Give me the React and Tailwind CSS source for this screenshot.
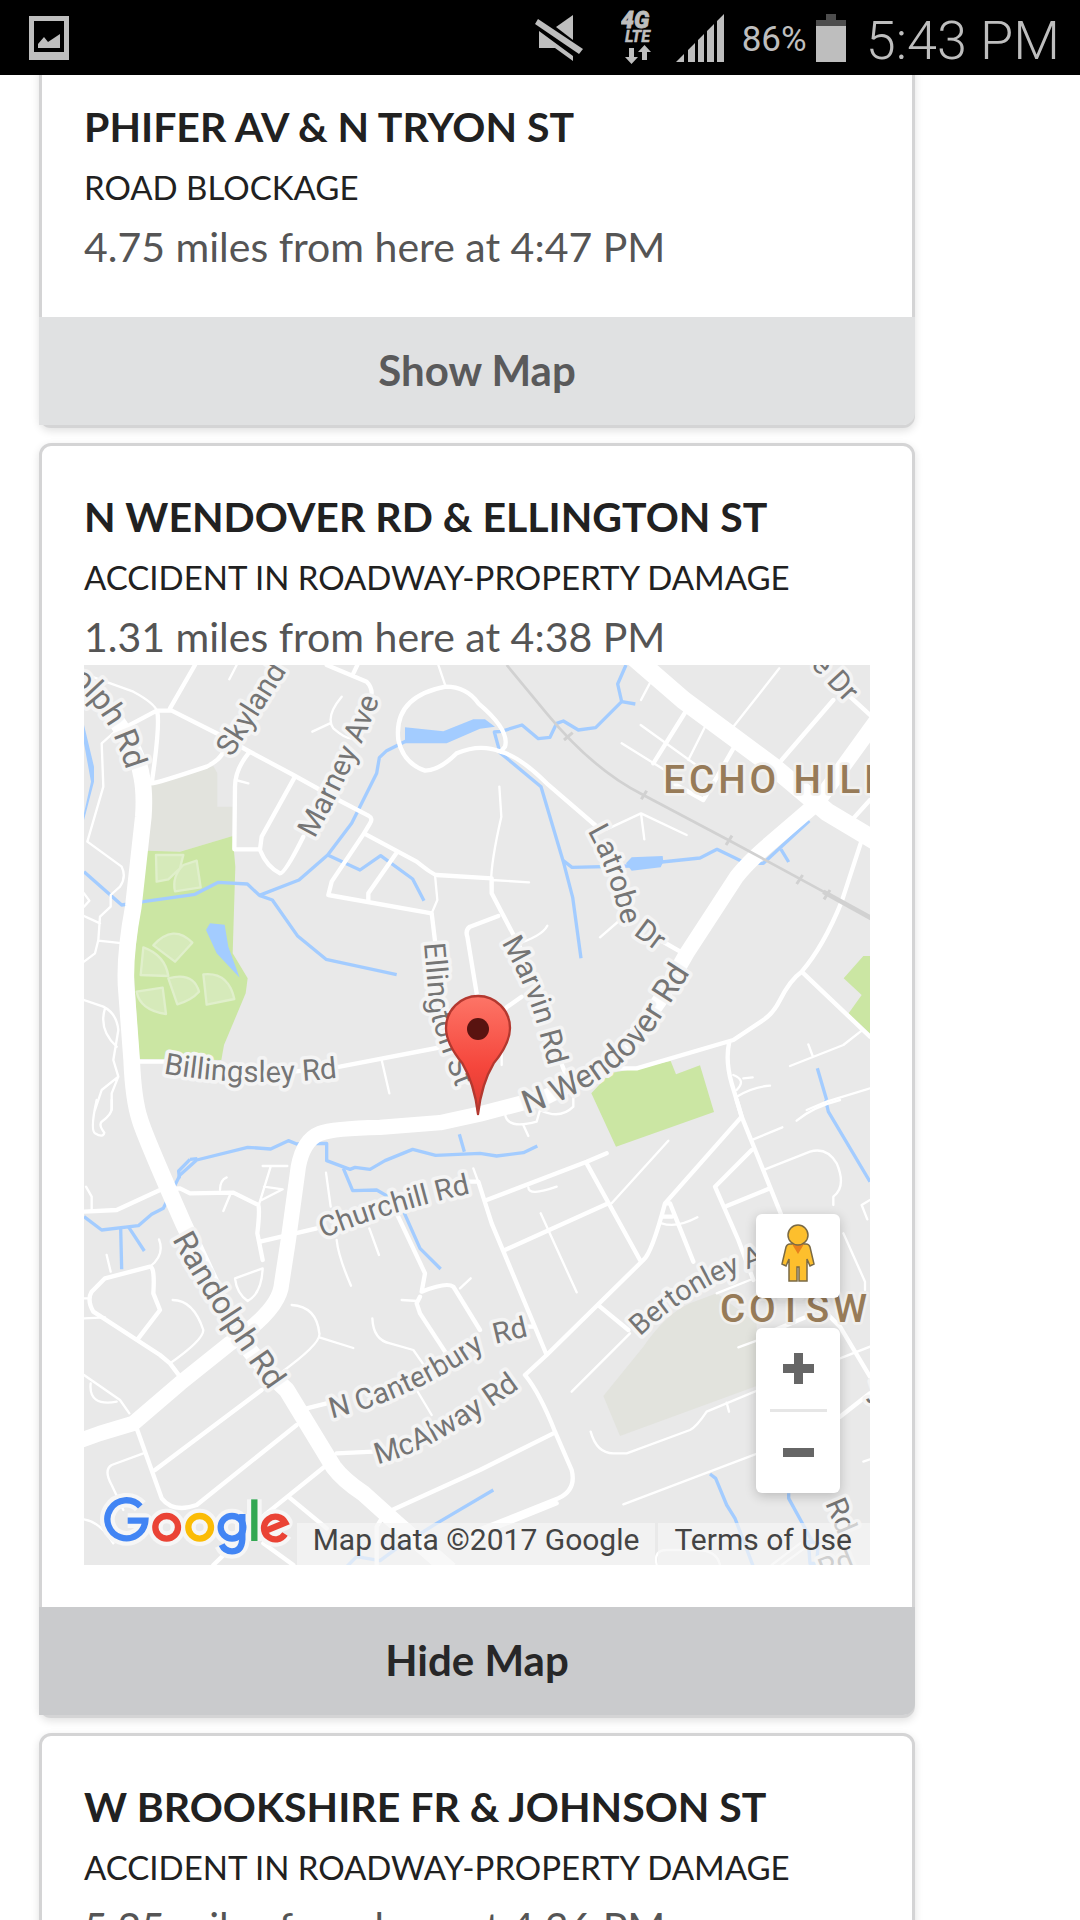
import { useId } from "react";

const incidents = [
  {
    place: "PHIFER AV & N TRYON ST",
    kind: "ROAD BLOCKAGE",
    meta: "4.75 miles from here at 4:47 PM",
    open: false,
  },
  {
    place: "N WENDOVER RD & ELLINGTON ST",
    kind: "ACCIDENT IN ROADWAY-PROPERTY DAMAGE",
    meta: "1.31 miles from here at 4:38 PM",
    open: true,
  },
  {
    place: "W BROOKSHIRE FR & JOHNSON ST",
    kind: "ACCIDENT IN ROADWAY-PROPERTY DAMAGE",
    meta: "5.25 miles from here at 4:36 PM",
    open: false,
  },
];

function StatusBar() {
  return (
    <header className="relative z-10 flex h-[75px] shrink-0 items-center bg-black pr-5 pl-[29px] font-['Roboto',sans-serif] text-[#bebebe]">
      <svg viewBox="0 0 40 44" className="h-11 w-10" fill="#bebebe" aria-label="Picture saved">
        <path fillRule="evenodd" d="M0 0H40V44H0ZM5 5V36H35V5Z" />
        <path d="M9 32V28L15 21L19 26L31 18V32Z" />
      </svg>
      <div className="ml-auto flex items-center">
        <svg viewBox="0 0 48 46" className="h-[46px] w-12" fill="#bebebe" aria-label="Sound off">
          <path d="M38 0V25L21 12Z" />
          <path d="M4 16L38 41V46L20 33H4Z" />
          <path d="M3 4L48 34L44 39L0 9Z" />
        </svg>
        <svg viewBox="0 0 34 56" className="ml-[38px] h-14 w-[34px]" fill="#bebebe" stroke="#bebebe" aria-label="4G LTE">
          <text x="0" y="18" fontSize="23" strokeWidth="0.8" className="font-['Roboto'] font-black italic">4G</text>
          <text x="4" y="32" fontSize="16" strokeWidth="0.5" className="font-['Roboto'] font-bold italic">LTE</text>
          <path stroke="none" d="M8 38H13V47H17L10.500 54L4 47H8Z" />
          <path stroke="none" d="M21 50H26V42H30L23.500 35L17 42H21Z" />
        </svg>
        <svg viewBox="0 0 48 48" className="ml-[21px] h-12 w-12" fill="#bebebe" aria-label="Signal">
          <path d="M0 48L8 40V48ZM12 48V36L19 29V48ZM22 48V26L28 20V48ZM31 48V17L38 10V48ZM41 48V7L48 0V48Z" />
        </svg>
        <span className="ml-[18px] pt-1.5 text-[35px]">86%</span>
        <svg viewBox="0 0 30 48" className="ml-[9px] h-12 w-[30px]" aria-label="Battery">
          <path fill="#4d4d4d" d="M10 0H20V6H30V12H0V6H10Z" />
          <path fill="#bebebe" d="M0 12H30V48H0Z" />
        </svg>
        <time className="ml-[20px] pt-1.5 text-[54px] font-light">5:43 PM</time>
      </div>
    </header>
  );
}

function Label({ d, size = 89, children }) {
  const id = useId();
  return (
    <>
      <path id={id} d={d} fill="none" />
      <text
        className="font-['Roboto']"
        fontSize={size}
        fill="#757575"
        stroke="#f4f4f4"
        strokeWidth="22"
        strokeLinejoin="round"
        paintOrder="stroke"
      >
        <textPath href={`#${id}`}>{children}</textPath>
      </text>
    </>
  );
}

function District({ x, y, children }) {
  return (
    <text
      x={x}
      y={y}
      className="font-['Roboto'] font-medium tracking-widest"
      fontSize="116"
      fill="#977b58"
      stroke="#f1f0ee"
      strokeWidth="16"
      strokeLinejoin="round"
      paintOrder="stroke"
    >
      {children}
    </text>
  );
}

function MapDrawing() {
  return (
    <svg
      viewBox="12 15 2358 2700"
      preserveAspectRatio="xMidYMid slice"
      className="block h-full w-full bg-[#e9e9e9]"
      role="img"
      aria-label="Map of N Wendover Rd and Ellington St"
    >
      <defs>
        <linearGradient id="pin" x1="0" y1="0" x2="0" y2="1">
          <stop offset="0" stopColor="#fd7567" />
          <stop offset="0.6" stopColor="#f5463c" />
          <stop offset="1" stopColor="#d93a30" />
        </linearGradient>
      </defs>

      {/* school grounds and parks */}
      <g fill="#e2e3dd">
        <path d="M210 372L400 318L412 340V440H458V528L300 575H200Z" />
        <path d="M1570 2208L1690 2060Q1760 1960 1830 1930L1910 1900L2030 1990V2178L1620 2328Z" />
      </g>
      <g fill="#cbe6a3">
        <path d="M200 572L300 575L458 528L466 620L458 880L503 955L497 1000L432 1155L424 1200L178 1197L160 920Z" />
        <path d="M1534 1300L1590 1240L1670 1225L1772 1203L1788 1243L1860 1216L1902 1356L1608 1460Z" />
        <path d="M2291 955L2350 888H2380V1130L2306 1060L2345 1005Z" />
      </g>
      <g fill="#d6eaba" stroke="#e0efcb" strokeWidth="7" strokeLinejoin="round">
        <path d="M228 585H310L300 625L265 658L230 665Z" />
        <path d="M310 615L350 602L362 682L285 694Q275 650 310 615Z" />
        <path d="M220 856Q280 790 337 848L285 905Z" />
        <path d="M190 862Q255 885 265 948L182 945Z" />
        <path d="M265 955Q340 935 357 995Q335 1020 292 1033Z" />
        <path d="M370 943Q445 935 463 1017L380 1034Z" />
        <path d="M170 995L248 983L258 1062Q180 1050 170 995Z" />
      </g>

      {/* water */}
      <g fill="#a3ccff">
        <path d="M390 790L434 794L445 860L479 953L410 880L378 810Z" />
        <path d="M975 202L1090 214L1180 178H1215L1245 200L1200 206L1100 250H975Z" />
        <path d="M1655 592L1748 588L1750 605L1742 622L1655 632L1638 610Z" />
        <path d="M12 195L42 320V365L12 480L12 460L33 365L12 250Z" />
      </g>
      <g fill="none" stroke="#a3ccff" strokeWidth="10" strokeLinejoin="round">
        <path d="M12 635L125 735L190 725L345 703L415 667L502 672L538 706L657 660L743 585L815 490L890 340L898 293L920 272L980 242" />
        <path d="M538 706L577 720L652 827L738 898L950 944" />
        <path d="M743 585L840 630L902 587L998 657L1032 722" />
        <path d="M1638 15L1613 72L1625 125L1547 203L1495 210L1450 183L1430 190L1410 232L1375 236L1326 195L1265 214L1243 216L1260 278L1383 380L1450 605L1478 712L1503 895" />
        <path d="M1625 125L1666 132M1450 602L1476 622L1650 618M1745 606L1860 594L1911 568L1990 606M2035 610H2050L2188 482M2103 568L2126 606" />
      </g>
      <g transform="translate(0 1320)" fill="none" stroke="#a3ccff" strokeWidth="10" strokeLinejoin="round">
        <path d="M12 350L65 390L175 377L215 343L250 325L300 225L350 180L503 142L572 147L625 122L650 132L740 130V182L810 208L825 202L870 208L915 182L998 148L1067 166L1200 160L1250 168L1330 158L1372 138" />
        <path d="M330 178L296 213L298 235M330 178L352 176M122 385L125 508M145 380L193 453M790 205L818 272L890 270L960 310L1020 445L1082 507M1138 103L1153 155M1240 1170L1070 1270L950 1345L900 1382L830 1370L800 1400" />
        <path d="M2237 0L2245 35L2370 245M2212 -95L2240 0M1890 1122L1907 1135L1940 1215L1965 1255L2020 1400M2126 1180V1195L2200 1330" />
        <path d="M2185 1325L2215 1330L2210 1390H2190Z" />
      </g>

      {/* lanes */}
      <g fill="none" stroke="#fff" strokeWidth="7" strokeLinejoin="round" strokeLinecap="round">
        <path d="M35 50L160 95Q225 130 232 155M110 210L65 250L70 380L22 545L125 620Q140 650 120 680L92 705V740L60 770L55 840L45 880L12 905M12 768L60 790M55 842L130 850M12 1020L70 1040Q110 1060 115 1110L100 1200L115 1250L95 1300V1350M75 1045Q55 1110 110 1160M115 1250L65 1290L45 1350M12 700L28 722L12 740" />
        <path d="M448 58L470 15M785 110Q735 170 760 205Q800 240 820 235M750 190L697 215M467 360L505 370M1065 645L1072 720L1055 760M905 1200L928 1300M1075 15L1097 80" />
        <path d="M1258 380L1264 470Q1225 640 1235 700M1235 660L1347 667M1300 855Q1385 830 1402 797M1560 832L1620 780M1580 508L1683 460L1820 525M1683 460L1693 538M1683 120L1720 50M1960 200L2098 25M1682 195L1890 345M1625 250L1770 340M1825 300L1875 200M2130 1218L2290 1155L2345 1112M2185 1153L2198 1188M1960 1245Q2000 1260 1970 1290M1970 1310Q2020 1280 2070 1277M1990 1255L2018 1252M2180 1350L2240 1325L2370 1285M1265 1215V1180" />
      </g>
      <g transform="translate(0 1320)" fill="none" stroke="#fff" strokeWidth="7" strokeLinejoin="round" strokeLinecap="round">
        <path d="M50 0Q30 90 45 100Q70 115 73 98Q55 75 65 65Q95 45 95 25V0M18 260L35 290V330M80 465L92 515M237 418Q255 465 210 500M12 595H30M12 655L75 652M420 270Q420 240 440 232M450 285L430 333M548 198L622 198M572 200L538 310M552 260L608 268L545 300M278 600Q340 600 370 690Q370 720 270 790M548 505L465 535Q470 580 503 603Q545 580 548 505M635 615Q710 620 718 700Q725 730 600 820M718 712L820 744M738 218L752 320M770 420Q775 470 813 557M868 385L897 465M965 600L1012 603M1140 565L1172 535M877 655Q880 720 930 730L1000 750L1035 800M1010 870L1055 945" />
        <path d="M12 825L120 900L148 940M32 850Q25 920 110 905M190 1060L95 1095Q70 1110 95 1155L130 1230M12 1258Q60 1265 100 1330M1180 205L1200 260" />
        <path d="M1275 40Q1280 90 1370 65L1380 30Q1440 60 1480 20V-10M1330 75L1345 108M1345 262Q1345 290 1430 260M1382 340L1490 577M1595 310L1765 122M1745 370Q1790 385 1852 352M2020 118L2107 82M2055 208L2190 155Q2240 140 2270 190Q2300 260 2260 290V315M2150 62Q2200 20 2280 0M2290 400L2355 545V570M2370 300L2345 315L2362 358M1475 875L1650 700M1532 995Q1550 1060 1600 1060H1640L1830 990Q1850 980 1880 935L2060 860M1940 908L1947 935M1630 1213L2060 1050M1975 742L2030 722M1910 580L2010 540M2280 775L2370 740M2350 1085L2370 1078M1730 1395Q1720 1350 1760 1350H1850Q1910 1350 1920 1395M2075 1395L2160 1330M2105 1395L2180 1340" />
      </g>

      {/* local streets */}
      <g fill="none" stroke="#fff" strokeWidth="13" strokeLinejoin="round" strokeLinecap="round">
        <path d="M140 200L230 152H275L420 225L500 270L640 345L775 420L865 467Q880 475 870 490L852 520L1010 605Q1060 645 1070 645L1235 655V700L1340 900M270 145L345 15M232 155Q240 200 215 370Q230 370 380 320Q420 300 430 275M505 280Q465 330 465 380L463 568H540L545 530L645 350M540 570Q560 620 600 640Q615 640 670 530M852 520L755 665L745 705L1055 760L1072 900M952 575L865 700V720M740 15L860 65Q875 80 875 100M820 40L832 15" />
        <path d="M1170 800Q1155 810 1162 830L1190 1000M1170 800L1255 768M1262 275Q1200 250 1130 280Q1080 330 1035 332Q970 310 955 240Q940 110 1097 80Q1160 80 1195 130Q1290 210 1275 260L1262 275Q1320 290 1400 370L1545 495M1740 840L1810 880M180 1205H260M640 1235L780 1220L1195 1140L1280 1042L1325 1010M1440 1200L1460 1250" />
        <path d="M1720 310L1820 150M2105 300L2260 120M2310 110L2370 165M2320 475L2370 420M2342 550L2285 725Q2230 860 2165 935Q2130 960 2100 1020Q2080 1060 2050 1080L1960 1140L1670 1225H1600M2165 935L2370 1130M1948 1145Q1935 1200 1955 1270L1985 1370M1870 420L1900 370L1960 265M1870 420L1780 370" />
      </g>
      <g transform="translate(0 1320)" fill="none" stroke="#fff" strokeWidth="13" strokeLinejoin="round" strokeLinecap="round">
        <path d="M12 335L110 330L240 270L300 265L330 280L460 278L535 315Q540 330 532 400L548 480M540 425L710 385M300 830L270 790L240 765L40 635Q20 600 35 575L75 535L210 500Q225 500 220 580L240 630L175 715M170 985L245 1195Q280 1240 350 1215L650 975M225 1110L545 870M680 925L740 910M770 1060L880 1055M740 1095L560 1240L400 1395M625 1190L740 1285M550 1330L640 1395M925 1235L1200 1110L1420 1000M890 1395V1280L915 1240" />
        <path d="M950 340L1035 520L1025 575Q1100 545 1120 560L1200 690M1020 590L1010 610L1020 640L1105 770" />
        <path d="M1120 245H1195L1235 370L1400 765L1335 825M1220 300L1520 185L1580 160M1520 190L1680 480M1275 450L1585 310M1400 765L1690 480Q1715 460 1755 310L1985 50L1970 0M1755 310H1770L1840 485M1745 350H1775M1985 50L2110 360M1940 318L2070 265M2015 150L1905 260L1975 420L2020 540M1560 620L1645 690M2200 600L2280 680L2370 830M2280 950L2370 880M1335 825Q1380 880 1425 995L1475 1110Q1490 1170 1435 1195L1170 1300M1430 1210L1180 1310M2085 690L2180 650M1335 680H1355" />
      </g>

      {/* main roads */}
      <g fill="none" stroke="#fff" strokeWidth="50" strokeLinejoin="round">
        <path d="M-60 -20L60 120Q170 250 185 350Q195 400 190 470L160 740Q130 900 140 1000L155 1200Q160 1320 180 1380Q195 1430 310 1690L450 1990Q530 2110 620 2190L760 2420Q790 2460 850 2500L950 2590L1110 2730" />
        <path d="M1660 -10L1810 120L2080 320L2240 455L2390 545" strokeWidth="56" />
        <path d="M0 2342L60 2320L160 2290L300 2170L450 2050Q600 1950 605 1870L625 1740L655 1520Q670 1440 720 1420Q760 1405 900 1402L1080 1388L1200 1362L1400 1310Q1560 1230 1640 1160L1740 1020L1820 880L1970 650Q2000 610 2070 550L2210 430L2390 180" strokeWidth="46" />
      </g>

      {/* railway */}
      <g fill="none" stroke="#d1d1d1">
        <path d="M1280 15L1400 160Q1540 330 1690 405L1945 540L2240 700" strokeWidth="8" />
        <path d="M2230 695L2380 778" strokeWidth="14" />
        <path d="M1452 240L1478 218M1684 418L1700 392M1938 555L1956 527M2150 672L2168 645M2232 718L2250 690" strokeWidth="9" />
      </g>

      <Label size={96} d="M-30 62Q55 140 92 210Q120 260 160 400">olph Rd</Label>
      <Label d="M455 293L660 -30">Skyland</Label>
      <Label d="M703 537Q850 270 930 30">Marney Ave</Label>
      <Label d="M250 1240Q520 1290 840 1245">Billingsley Rd</Label>
      <Label d="M1032 850L1048 1040Q1060 1120 1160 1360">Ellington St</Label>
      <Label d="M1522 513Q1595 640 1640 860">Latrobe</Label>
      <Label d="M1658 822L1790 920">Dr</Label>
      <Label d="M1264 848Q1340 980 1370 1090L1425 1290">Marvin Rd</Label>
      <Label size={98} d="M1340 1362Q1590 1280 1720 1110L1900 830">N Wendover Rd</Label>
      <Label d="M2190 15L2330 165">e Dr</Label>
      <District x="1750" y="398">ECHO HILLS</District>
      <g transform="translate(0 1320)">
        <Label size={87} d="M730 415Q950 325 1240 265">Churchill Rd</Label>
        <Label size={96} d="M276 418Q395 640 660 1000">Randolph Rd</Label>
        <Label size={87} d="M755 955Q1030 890 1270 705">N Canterbury</Label>
        <Label size={87} d="M1246 732L1380 700">Rd</Label>
        <Label d="M892 1092Q1074 1055 1410 795">McAlway Rd</Label>
        <Label size={86} d="M1680 710Q1806 590 1956 525L2160 450">Bertonley Ave</Label>
        <Label d="M2235 1210L2290 1340">Rd</Label>
        <Label d="M2230 1440L2330 1400">Rd</Label>
        <Label d="M2362 915L2420 895">J</Label>
        <District x="1920" y="665">COTSWOLD</District>
      </g>

      {/* marker */}
      <path
        d="M1194 1362Q1183 1270 1147 1210Q1098 1150 1098 1104A96 96 0 0 1 1290 1104Q1290 1150 1241 1210Q1205 1270 1194 1362Z"
        fill="url(#pin)"
        stroke="#b3382f"
        strokeWidth="7"
        strokeLinejoin="round"
      />
      <circle cx="1194" cy="1107" r="33" fill="#591310" />
    </svg>
  );
}

function LogoStrokes({ halo }) {
  const tone = (c) => (halo ? "#f6f6f6" : c);
  const w = halo ? 44 : 19;
  return (
    <g fill="none" strokeWidth={w} strokeLinejoin={halo ? "round" : "miter"}>
      <path d="M181 1219A57 57 0 1 0 196 1262H143" stroke={tone("#4285f4")} />
      <circle cx="260" cy="1282" r="34" stroke={tone("#ea4335")} />
      <circle cx="359" cy="1282" r="34" stroke={tone("#fbbc05")} />
      <circle cx="456" cy="1282" r="34" stroke={tone("#4285f4")} />
      <path d="M487 1242V1318Q485 1354 456 1354Q434 1354 425 1334" stroke={tone("#4285f4")} />
      <path d="M523 1198V1323" stroke={tone("#34a853")} />
      <path d="M551 1295L616 1268A34 34 0 1 0 615 1302" stroke={tone("#ea4335")} />
    </g>
  );
}

function GoogleLogo() {
  return (
    <svg viewBox="54 1176 588 210" className="h-[70px] w-[196px]" role="img" aria-label="Google">
      <LogoStrokes halo />
      <LogoStrokes />
    </svg>
  );
}

function Pegman() {
  return (
    <svg viewBox="0 0 34 60" className="h-[60px] w-[34px]" fill="#fdbf2d" stroke="#7a6a45" strokeWidth="1.5" aria-hidden="true">
      <path d="M9 21H25Q28 21 29 24L33 41L29 43L26 36V58H18V44H16V58H8V36L5 43L1 41L5 24Q6 21 9 21Z" />
      <path d="M11 21H23L17 31Z" fill="#e8801c" stroke="none" />
      <circle cx="17" cy="12" r="10" />
    </svg>
  );
}

function IncidentMap() {
  return (
    <div className="relative h-[900px] overflow-hidden">
      <MapDrawing />
      <div className="absolute bottom-[3px] left-[14px]">
        <GoogleLogo />
      </div>
      <div className="absolute right-[30px] bottom-[72px] flex w-[84px] flex-col gap-[30px]">
        <button
          type="button"
          aria-label="Street View"
          className="flex h-[84px] items-center justify-center rounded-md bg-white pb-1.5 shadow-[0_3px_12px_rgba(0,0,0,0.2)]"
        >
          <Pegman />
        </button>
        <div className="flex flex-col items-center rounded-md bg-white shadow-[0_3px_12px_rgba(0,0,0,0.2)]">
          <button type="button" aria-label="Zoom in" className="flex h-[81px] w-full items-center justify-center">
            <svg viewBox="0 0 31 31" className="h-[31px] w-[31px]" fill="#666" aria-hidden="true">
              <path d="M11 0H20V11H31V20H20V31H11V20H0V11H11Z" />
            </svg>
          </button>
          <div className="h-[3px] w-[57px] bg-[#e6e6e6]" />
          <button type="button" aria-label="Zoom out" className="flex h-[81px] w-full items-center justify-center">
            <svg viewBox="0 0 31 31" className="h-[31px] w-[31px]" fill="#666" aria-hidden="true">
              <path d="M0 11H31V20H0Z" />
            </svg>
          </button>
        </div>
      </div>
      <div className="absolute right-0 bottom-0 flex gap-[3px] font-['Roboto',sans-serif] text-[30px] leading-[34px] whitespace-nowrap text-[#444]">
        <span className="bg-[#f5f5f5]/70 px-4 pb-2">Map data ©2017 Google</span>
        <a href="#terms" className="bg-[#f5f5f5]/70 pr-[18px] pb-2 pl-4">
          Terms of Use
        </a>
      </div>
    </div>
  );
}

function IncidentCard({ place, kind, meta, open }) {
  return (
    <article className="rounded-xl border-3 border-[#d4d4d5] bg-white shadow-[0_3px_9px_rgba(0,0,0,0.12)]">
      <div className="p-[42px]">
        <h2 className="text-[41px] leading-[58px] font-bold text-[#212121]">{place}</h2>
        <p className="text-[33px] leading-[62px] text-[#212121]">{kind}</p>
        <p className="text-[41px] leading-[57px] text-[#555]">{meta}</p>
        {open && <IncidentMap />}
      </div>
      <div className="-mx-[3px]">
        <button
          type="button"
          aria-expanded={open}
          className={
            open
              ? "h-[108px] w-full rounded-br-xl bg-[#cacbcd] pb-0.5 text-[42px] leading-none font-bold text-[#272728]"
              : "h-[108px] w-full rounded-br-xl bg-[#e0e1e2] pb-0.5 text-[42px] leading-none font-bold text-[#5a5a5b]"
          }
        >
          {open ? "Hide Map" : "Show Map"}
        </button>
      </div>
    </article>
  );
}

export default function App() {
  return (
    <div className="flex h-screen flex-col overflow-hidden bg-white font-['Lato',sans-serif]">
      <StatusBar />
      <main className="-mt-[22px] flex flex-col gap-[15px] pr-[165px] pl-[39px]">
        {incidents.map((item) => (
          <IncidentCard key={item.place} {...item} />
        ))}
      </main>
    </div>
  );
}
